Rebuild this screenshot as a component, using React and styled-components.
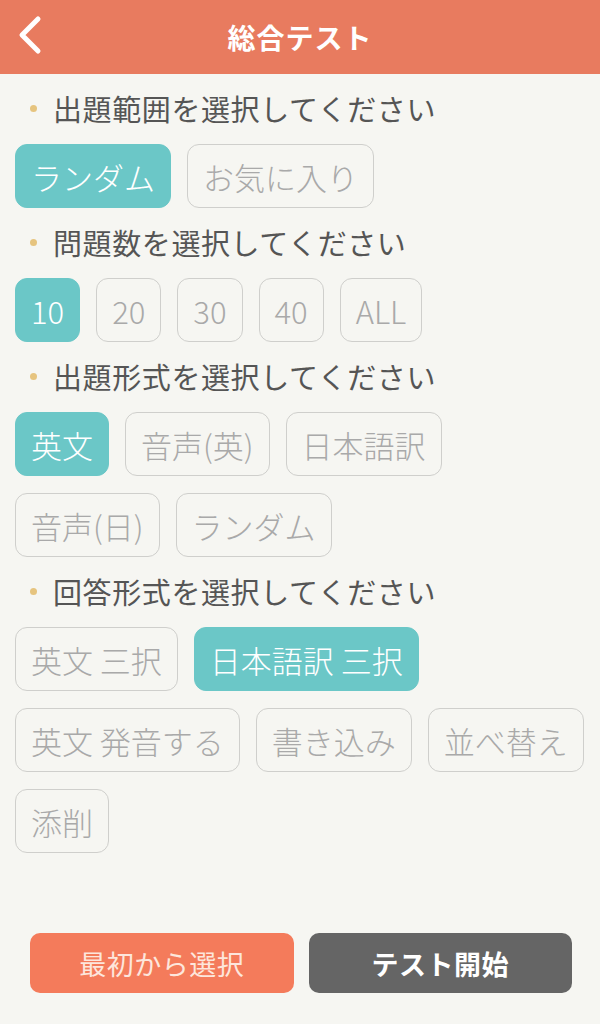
import React, { useState } from 'react'
import styled, { createGlobalStyle } from 'styled-components'

const Global = createGlobalStyle`
  body {
    margin: 0;
    background: #f6f6f2;
    font-family: "Noto Sans CJK JP", "Noto Sans", sans-serif;
  }
`
const Page = styled.div`
  min-height: 100vh;
  display: flex;
  flex-direction: column;
  background: #f6f6f2;
`
const Header = styled.div`
  height: 74px;
  background: #e87b5f;
  display: flex;
  align-items: center;
  justify-content: center;
  position: relative;
  color: #fff;
  font-size: 28px;
  font-weight: 700;
  letter-spacing: 1px;
`
const Back = styled.button`
  position: absolute;
  left: 10px;
  top: 12px;
  width: 40px;
  height: 46px;
  border: none;
  background: none;
  padding: 0;
  display: flex;
  align-items: center;
  justify-content: center;
`
const Content = styled.div`
  flex: 1;
  padding: 16px 9px 16px 15px;
`
const Section = styled.div`
  & + & {
    margin-top: 16px;
  }
`
const Title = styled.div`
  height: 36px;
  display: flex;
  align-items: center;
  margin-bottom: 18px;
  font-size: 29px;
  color: #555;
  letter-spacing: 0.6px;
  &::before {
    content: '';
    width: 7px;
    height: 7px;
    border-radius: 50%;
    background: #e6c47f;
    margin: 0 16px 0 15px;
  }
`
const Chips = styled.div`
  display: flex;
  flex-wrap: wrap;
  gap: 17px 16px;
`
const Chip = styled.button`
  height: 64px;
  box-sizing: border-box;
  padding: 0 15px;
  border-radius: 12px;
  border: 1px solid ${(props) => (props.active ? '#6bc7c7' : '#cfcfcc')};
  background: ${(props) => (props.active ? '#6bc7c7' : 'transparent')};
  color: ${(props) => (props.active ? '#fff' : '#a9a9a9')};
  font-family: inherit;
  font-size: 31px;
  font-weight: 300;
  white-space: pre;
`
const Footer = styled.div`
  display: flex;
  gap: 15px;
  padding: 0 28px 31px 30px;
`
const Action = styled.button`
  flex: 1;
  height: 60px;
  border: none;
  border-radius: 10px;
  font-family: inherit;
  font-size: 27px;
  background: ${(props) => (props.dark ? '#656565' : '#f47b5b')};
  color: ${(props) => (props.dark ? '#fff' : '#fde6dc')};
  font-weight: ${(props) => (props.dark ? 700 : 400)};
  letter-spacing: 0.5px;
`

const sections = [
  { title: '出題範囲を選択してください', items: ['ランダム', 'お気に入り'], init: 0 },
  { title: '問題数を選択してください', items: ['10', '20', '30', '40', 'ALL'], init: 0 },
  {
    title: '出題形式を選択してください',
    items: ['英文', '音声(英)', '日本語訳', '音声(日)', 'ランダム'],
    init: 0,
  },
  {
    title: '回答形式を選択してください',
    items: ['英文 三択', '日本語訳 三択', '英文 発音する', '書き込み', '並べ替え', '添削'],
    init: 1,
  },
]

const App = () => {
  const [picked, setPicked] = useState(sections.map((s) => s.init))
  return (
    <Page>
      <Global />
      <Header>
        <Back>
          <svg width="26" height="40" viewBox="0 0 26 40">
            <path
              d="M21 4 L5 20 L21 36"
              fill="none"
              stroke="#fff"
              strokeWidth="5"
              strokeLinecap="round"
              strokeLinejoin="round"
            />
          </svg>
        </Back>
        総合テスト
      </Header>
      <Content>
        {sections.map((s, si) => (
          <Section key={s.title}>
            <Title>{s.title}</Title>
            <Chips>
              {s.items.map((item, i) => (
                <Chip
                  key={item}
                  active={picked[si] === i}
                  onClick={() => {
                    const next = [...picked]
                    next[si] = i
                    setPicked(next)
                  }}
                >
                  {item}
                </Chip>
              ))}
            </Chips>
          </Section>
        ))}
      </Content>
      <Footer>
        <Action onClick={() => setPicked(sections.map((s) => s.init))}>最初から選択</Action>
        <Action dark>テスト開始</Action>
      </Footer>
    </Page>
  )
}

export default App
